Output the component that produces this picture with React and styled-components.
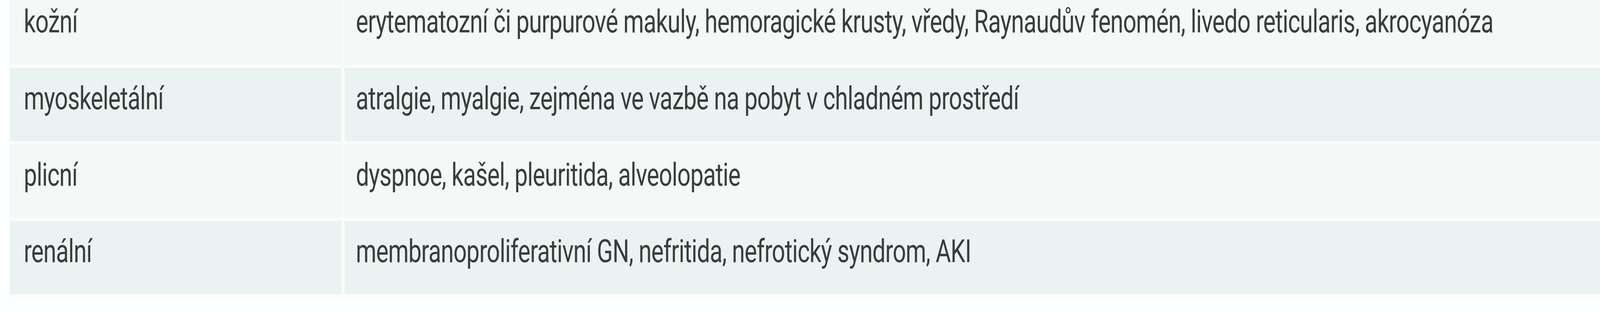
import React from 'react'
import styled, { createGlobalStyle } from 'styled-components'

// the sheet is drawn on a 5204 x 800 grid; sizes follow the window so it always fills it
const X = px => `${((px / 5204) * 100).toFixed(4)}vw`
const Y = px => `${((px / 800) * 100).toFixed(4)}vh`

const rows = [
  {
    organ: 'kožní',
    signs:
      'erytematozní či purpurové makuly, hemoragické krusty, vředy, Raynaudův fenomén, livedo reticularis, akrocyanóza'
  },
  {
    organ: 'myoskeletální',
    signs: 'atralgie, myalgie, zejména ve vazbě na pobyt v chladném prostředí'
  },
  {
    organ: 'plicní',
    signs: 'dyspnoe, kašel, pleuritida, alveolopatie'
  },
  {
    organ: 'renální',
    signs: 'membranoproliferativní GN, nefritida, nefrotický syndrom, AKI'
  }
]

function useSqueeze() {
  const read = () => {
    if (typeof window === 'undefined') return 0.93
    const sx = window.innerWidth / 5204
    const sy = window.innerHeight / 800
    return 0.93 * (sx / sy)
  }
  const [squeeze, setSqueeze] = React.useState(read)

  React.useEffect(() => {
    const onResize = () => setSqueeze(read())
    window.addEventListener('resize', onResize)
    return () => window.removeEventListener('resize', onResize)
  }, [])

  return squeeze
}

function App() {
  const squeeze = useSqueeze()
  const textStyle = { transform: `scaleX(${squeeze})` }

  return (
    <>
      <GlobalStyle />
      <Page>
        <Table>
          {rows.map((row, i) => (
            <React.Fragment key={row.organ}>
              <Cell $shade={i % 2 === 1} $first={i === 0} $label>
                <Text style={textStyle}>{row.organ}</Text>
              </Cell>
              <Cell $shade={i % 2 === 1} $first={i === 0}>
                <Text style={textStyle}>{row.signs}</Text>
              </Cell>
            </React.Fragment>
          ))}
        </Table>
      </Page>
    </>
  )
}

const GlobalStyle = createGlobalStyle`
  html, body {
    margin: 0;
    padding: 0;
    overflow: hidden;
    background: #ffffff;
  }
`

const Page = styled.div`
  width: 100vw;
  height: 100vh;
  overflow: hidden;
  background: #fdfefe;
  padding-left: ${X(32)};
  box-sizing: border-box;
`

const Table = styled.div`
  display: grid;
  grid-template-columns: ${X(1078)} minmax(0, 1fr);
  column-gap: ${X(10)};
  row-gap: ${Y(8)};
  padding-bottom: ${Y(8)};
  background: #fafcfc;
`

const Cell = styled.div`
  box-sizing: border-box;
  min-width: 0;
  height: ${props => (props.$first ? Y(166) : Y(188))};
  padding-top: ${props => (props.$first ? Y(14) : Y(37))};
  padding-left: ${props => (props.$label ? X(45) : X(38))};
  background: ${props => (props.$shade ? '#eaf3f1' : '#f4f8f7')};
`

// the printed face is a condensed grotesque; Roboto squeezed sideways stands in for it
const Text = styled.span`
  display: inline-block;
  max-width: 100%;
  color: #393d3d;
  font-family: Roboto, 'Liberation Sans', sans-serif;
  font-size: ${Y(82)};
  line-height: ${Y(82)};
  letter-spacing: ${X(-1.5)};
  white-space: nowrap;
  transform-origin: left center;
`

export default App
